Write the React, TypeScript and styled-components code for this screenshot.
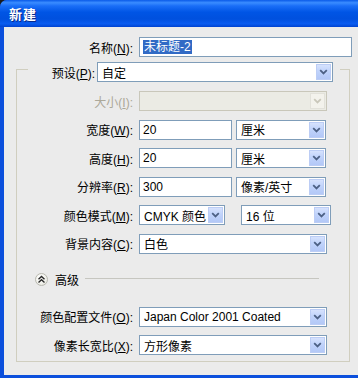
import React from "react";
import styled, { createGlobalStyle } from "styled-components";

const GlobalStyle = createGlobalStyle`
  html, body {
    margin: 0;
    padding: 0;
    background: #1b1b1b;
  }
  body {
    font-family: "Liberation Sans", "Noto Sans CJK SC", sans-serif;
    font-size: 12px;
    color: #000;
  }
`;

const Chevron = ({ disabled }: { disabled?: boolean }) => (
  <svg width="9" height="6" viewBox="0 0 9 6">
    <path
      d="M1.2 1.2 L4.5 4.4 L7.8 1.2"
      fill="none"
      stroke={disabled ? "#C9C7BA" : "#4D6185"}
      strokeWidth="1.8"
    />
  </svg>
);

type ComboProps = { w: number; value?: string; disabled?: boolean };

const Combo = ({ w, value, disabled }: ComboProps) => (
  <ComboBox $w={w} $disabled={disabled}>
    <ComboText>{value}</ComboText>
    <DropButton $disabled={disabled}>
      <Chevron disabled={disabled} />
    </DropButton>
  </ComboBox>
);

const App = () => {
  return (
    <>
      <GlobalStyle />
      <Window>
        <TitleBar>
          <Caption>新建</Caption>
        </TitleBar>
        <Body>
          <NameRow>
            <Label $w={131}>
              名称(<u>N</u>):
            </Label>
            <TextBox $w={213}>
              <Selected>未标题-2</Selected>
            </TextBox>
          </NameRow>

          <Frame>
            <Legend>
              <Label $w={69}>
                预设(<u>P</u>):
              </Label>
              <Combo w={236} value="自定" />
            </Legend>

            <Rows>
              <Row>
                <Label $w={118} $disabled>
                  大小(<u>I</u>):
                </Label>
                <Combo w={188} disabled />
              </Row>
              <Row>
                <Label $w={118}>
                  宽度(<u>W</u>):
                </Label>
                <TextBox $w={93}>20</TextBox>
                <Combo w={90} value="厘米" />
              </Row>
              <Row>
                <Label $w={118}>
                  高度(<u>H</u>):
                </Label>
                <TextBox $w={93}>20</TextBox>
                <Combo w={90} value="厘米" />
              </Row>
              <Row>
                <Label $w={118}>
                  分辨率(<u>R</u>):
                </Label>
                <TextBox $w={93}>300</TextBox>
                <Combo w={90} value="像素/英寸" />
              </Row>
              <Row>
                <Label $w={118}>
                  颜色模式(<u>M</u>):
                </Label>
                <Combo w={86} value="CMYK 颜色" />
                <Spacer />
                <Combo w={90} value="16 位" />
              </Row>
              <Row>
                <Label $w={118}>
                  背景内容(<u>C</u>):
                </Label>
                <Combo w={188} value="白色" />
              </Row>
            </Rows>

            <AdvancedRow>
              <ToggleIcon>
                <svg width="9" height="9" viewBox="0 0 9 9">
                  <path
                    d="M1.5 4.2 L4.5 1.4 L7.5 4.2 M1.5 7.6 L4.5 4.8 L7.5 7.6"
                    fill="none"
                    stroke="#2A2A2A"
                    strokeWidth="1.4"
                  />
                </svg>
              </ToggleIcon>
              <AdvancedText>高级</AdvancedText>
              <Divider />
            </AdvancedRow>

            <Rows>
              <Row>
                <Label $w={118}>
                  颜色配置文件(<u>O</u>):
                </Label>
                <Combo w={188} value="Japan Color 2001 Coated" />
              </Row>
              <Row>
                <Label $w={118}>
                  像素长宽比(<u>X</u>):
                </Label>
                <Combo w={188} value="方形像素" />
              </Row>
            </Rows>
          </Frame>
        </Body>
      </Window>
    </>
  );
};

const Window = styled.div`
  width: 358px;
  height: 378px;
  display: flex;
  flex-direction: column;
  box-sizing: border-box;
  background: #0b4fdc;
  border-top-left-radius: 7px;
  overflow: hidden;
`;

const TitleBar = styled.div`
  height: 27px;
  flex: none;
  display: flex;
  align-items: center;
  padding-left: 9px;
  background: linear-gradient(
    to bottom,
    #0a5ae8 0%,
    #3a8cff 10%,
    #1a6ef7 22%,
    #0055e5 45%,
    #0050de 70%,
    #0a5cf0 88%,
    #0043d0 100%
  );
`;

const Caption = styled.span`
  color: #fff;
  font-weight: bold;
  font-size: 13px;
  letter-spacing: 1px;
  text-shadow: 1px 1px 0 #0a2a8a;
`;

const Body = styled.div`
  flex: 1;
  margin: 0 0 3px 4px;
  background: #ebebeb;
  padding-top: 10px;
  box-sizing: border-box;
`;

const NameRow = styled.div`
  display: flex;
  align-items: center;
  gap: 4px;
`;

const Label = styled.label<{ $w: number; $disabled?: boolean }>`
  width: ${(p) => p.$w}px;
  flex: none;
  box-sizing: border-box;
  padding-right: 2px;
  text-align: right;
  white-space: nowrap;
  color: ${(p) => (p.$disabled ? "#ACA899" : "#000")};
`;

const TextBox = styled.div<{ $w: number }>`
  width: ${(p) => p.$w}px;
  height: 20px;
  flex: none;
  box-sizing: border-box;
  border: 1px solid #7f9db9;
  background: #fff;
  padding: 0 3px;
  display: flex;
  align-items: center;
  white-space: nowrap;
`;

const Selected = styled.span`
  background: #316ac5;
  color: #fff;
  line-height: 14px;
  padding: 0 1px;
`;

const ComboBox = styled.div<{ $w: number; $disabled?: boolean }>`
  width: ${(p) => p.$w}px;
  height: 20px;
  flex: none;
  box-sizing: border-box;
  border: 1px solid ${(p) => (p.$disabled ? "#C9C7BA" : "#7f9db9")};
  background: ${(p) => (p.$disabled ? "#EBEBE4" : "#fff")};
  padding: 1px;
  display: flex;
  align-items: stretch;
`;

const ComboText = styled.span`
  flex: 1;
  padding-left: 3px;
  display: flex;
  align-items: center;
  white-space: nowrap;
  overflow: hidden;
`;

const DropButton = styled.span<{ $disabled?: boolean }>`
  width: 15px;
  flex: none;
  box-sizing: border-box;
  display: flex;
  align-items: center;
  justify-content: center;
  border: 1px solid ${(p) => (p.$disabled ? "#E2E1DA" : "#BCCDF5")};
  background: ${(p) =>
    p.$disabled
      ? "#F3F2EC"
      : "linear-gradient(to bottom, #d6e2fd 0%, #c0d3fb 45%, #b3c8f7 100%)"};
`;

const Frame = styled.fieldset`
  margin: 0 0 0 12px;
  padding: 0 0 6px 0;
  width: 334px;
  box-sizing: border-box;
  border: 1px solid #d0cebf;
  min-inline-size: 0;
`;

const Legend = styled.legend`
  margin-left: 11px;
  padding: 5px 7px 0 0;
  display: flex;
  align-items: center;
`;

const Rows = styled.div`
  display: flex;
  flex-direction: column;
  gap: 8.5px;
  padding-top: 9px;
`;

const Row = styled.div`
  display: flex;
  align-items: center;
  gap: 4px;
`;

const Spacer = styled.span`
  width: 8px;
  flex: none;
`;

const AdvancedRow = styled.div`
  display: flex;
  align-items: center;
  margin: 18px 30px 10px 18px;
  height: 16px;
`;

const ToggleIcon = styled.span`
  width: 13px;
  height: 13px;
  flex: none;
  box-sizing: border-box;
  border-radius: 50%;
  border: 1px solid #b9b9b0;
  background: radial-gradient(circle at 40% 35%, #ffffff 0%, #f0f0ea 60%, #d8d8d0 100%);
  display: flex;
  align-items: center;
  justify-content: center;
`;

const AdvancedText = styled.span`
  margin-left: 7px;
  white-space: nowrap;
`;

const Divider = styled.span`
  flex: 1;
  height: 1px;
  margin: -2px 0 0 6px;
  background: #c6c6c0;
`;

export default App;
